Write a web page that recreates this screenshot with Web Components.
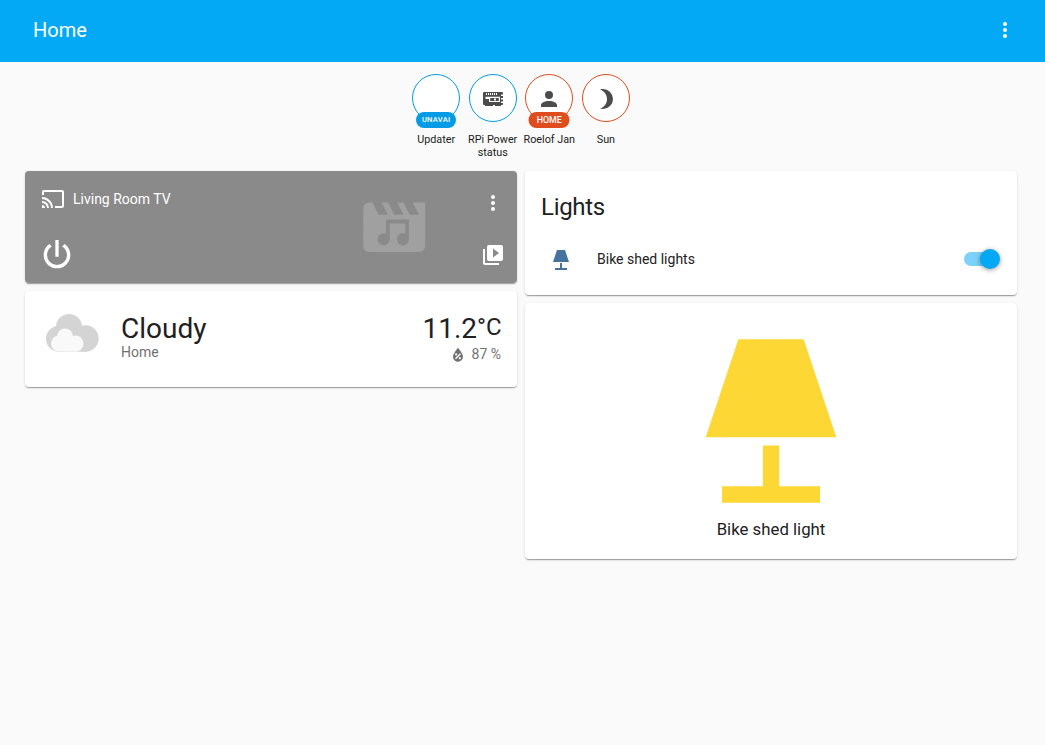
<!DOCTYPE html>
<html lang="en">
<head>
<meta charset="utf-8">
<title>Home</title>
<style>
  html, body { margin: 0; height: 100%; background: #fafafa; overflow: hidden; }
  body { font-family: Roboto, "Noto Sans", sans-serif; font-size: 14px; line-height: 20px; color: #212121; }
</style>
</head>
<body>
<dash-app></dash-app>
<script>
const ICONS = {
  dots: 'M12,16A2,2 0 0,1 14,18A2,2 0 0,1 12,20A2,2 0 0,1 10,18A2,2 0 0,1 12,16M12,10A2,2 0 0,1 14,12A2,2 0 0,1 12,14A2,2 0 0,1 10,12A2,2 0 0,1 12,10M12,4A2,2 0 0,1 14,6A2,2 0 0,1 12,8A2,2 0 0,1 10,6A2,2 0 0,1 12,4Z',
  cast: 'M1,10V12A9,9 0 0,1 10,21H12C12,14.92 7.07,10 1,10M1,14V16A5,5 0 0,1 6,21H8A7,7 0 0,0 1,14M1,18V21H4A3,3 0 0,0 1,18M21,3H3C1.89,3 1,3.89 1,5V8H3V5H21V19H14V21H21A2,2 0 0,0 23,19V5C23,3.89 22.1,3 21,3Z',
  power: 'M16.56,5.44L15.11,6.89C16.84,7.94 18,9.83 18,12A6,6 0 0,1 12,18A6,6 0 0,1 6,12C6,9.83 7.16,7.94 8.88,6.88L7.44,5.44C5.36,6.88 4,9.28 4,12A8,8 0 0,0 12,20A8,8 0 0,0 20,12C20,9.28 18.64,6.88 16.56,5.44M13,3H11V13H13',
  browse: 'M4,6H2V20A2,2 0 0,0 4,22H18V20H4V6M20,2H8A2,2 0 0,0 6,4V16A2,2 0 0,0 8,18H20A2,2 0 0,0 22,16V4A2,2 0 0,0 20,2M12,14.5V5.5L18,10L12,14.5Z',
  humidity: 'M12,3.25C12,3.25 6,10 6,14C6,17.32 8.69,20 12,20A6,6 0 0,0 18,14C18,10 12,3.25 12,3.25M14.47,9.97L15.53,11.03L9.53,17.03L8.47,15.97M9.75,10A1.25,1.25 0 0,1 11,11.25A1.25,1.25 0 0,1 9.75,12.5A1.25,1.25 0 0,1 8.5,11.25A1.25,1.25 0 0,1 9.75,10M14.25,14.5A1.25,1.25 0 0,1 15.5,15.75A1.25,1.25 0 0,1 14.25,17A1.25,1.25 0 0,1 13,15.75A1.25,1.25 0 0,1 14.25,14.5Z',
  account: 'M12,4A4,4 0 0,1 16,8A4,4 0 0,1 12,12A4,4 0 0,1 8,8A4,4 0 0,1 12,4M12,14C16.42,14 20,15.79 20,18V20H4V18C4,15.79 7.58,14 12,14Z',
  moon: 'M9,2C7.95,2 6.95,2.16 6,2.46C10.06,3.73 13,7.5 13,12C13,16.5 10.06,20.27 6,21.54C6.95,21.84 7.95,22 9,22A10,10 0 0,0 19,12A10,10 0 0,0 9,2Z',
  lamp: 'M8,2H16L20,14H4L8,2M11,15H13V20H18V22H6V20H11V15Z',
  board: 'M3,5H21A1,1 0 0,1 22,6V7.5H20V9H22V11H20V12.5H22V14.5H20V16H22V17A1,1 0 0,1 21,18H20V19H14V18H12V19H4V18H3A1,1 0 0,1 2,17V6A1,1 0 0,1 3,5M5,6V8H6V6M7,6V8H8V6M9,6V8H10V6M11,6V8H12V6M13,6V8H14V6M15,6V8H16V6M4.5,9.7V12H8V15H19V9.7M9.2,11H17.8V14H9.2M13,11.5V13.5H15V11.5Z',
  media: 'M18,4l2,4h-3l-2,-4h-2l2,4h-3l-2,-4H8l2,4H7L5,4H4c-1.1,0 -2,0.9 -2,2v12c0,1.1 0.9,2 2,2h16c1.1,0 2,-0.9 2,-2V4zM9.4,9.5V14.15A1.95,1.95 0 1,0 10.55,16V10.8H15.6V14.15A1.95,1.95 0 1,0 16.75,16V9.5Z'
};

function define(name, css, html) {
  customElements.define(name, class extends HTMLElement {
    constructor() {
      super();
      const t = document.createElement('template');
      t.innerHTML = '<style>' + css + '</style>' + html;
      this.attachShadow({ mode: 'open' }).append(t.content.cloneNode(true));
    }
  });
}

customElements.define('mdi-icon', class extends HTMLElement {
  connectedCallback() {
    if (this.shadowRoot) return;
    this.attachShadow({ mode: 'open' }).innerHTML =
      '<style>:host{display:block;flex:none;width:var(--size,24px);height:var(--size,24px)}svg{display:block;width:100%;height:100%}</style>' +
      '<svg viewBox="0 0 24 24" fill="currentColor" fill-rule="evenodd"><path d="' + ICONS[this.getAttribute('name')] + '"/></svg>';
  }
});

define('app-toolbar', `
  :host { display: flex; box-sizing: border-box; height: 62px; padding: 0 28px 2px 33px; align-items: center;
    justify-content: space-between; background: #03a9f4; color: #fff; font-size: 20px; }`,
  `<slot></slot><mdi-icon name="dots"></mdi-icon>`);

define('state-badge', `
  :host { display: block; width: 56.6px; text-align: center; font-size: 10.8px; line-height: 13px; --c: #039be5; }
  :host([red]) { --c: #df4c1e; }
  .ring { position: relative; box-sizing: border-box; width: 48px; height: 48px; margin: 0 auto 11px; border: 1px solid var(--c);
    border-radius: 50%; background: #fff; color: #4c4c4c; display: grid; place-items: center; padding-top: 2px; }
  ::slotted([slot=pill]) { position: absolute; left: 50%; top: 37px; transform: translateX(-50%); height: 16px; line-height: 16px;
    border-radius: 8px; background: var(--c); color: #fff; font-weight: 500; white-space: nowrap; text-align: center; }`,
  `<div class="ring"><slot name="icon"></slot><slot name="pill"></slot></div><slot></slot>`);

define('dash-card', `
  :host { display: block; box-sizing: border-box; height: var(--h); background: #fff; border-radius: 4px;
    box-shadow: 0 2px 1px -1px rgba(0,0,0,.2), 0 1px 1px 0 rgba(0,0,0,.14), 0 1px 3px 0 rgba(0,0,0,.12); }`,
  `<slot></slot>`);

define('media-player', `
  :host { display: flex; box-sizing: border-box; height: 100%; border-radius: 4px; background: #8a8a8a; color: #fff; padding: 16px 12px 8px 16px; justify-content: space-between; }
  .left { display: flex; flex-direction: column; flex: 1; gap: 24px; }
  .name { display: flex; gap: 8px; align-items: center; height: 24px; }
  .power { --size: 40px; margin-left: -4px; }
  .art { --size: 74.4px; color: #a0a0a0; margin: 2.6px 49.8px 0 0; }
  .right { display: flex; flex-direction: column; gap: 28px; padding-top: 4px; }`,
  `<div class="left"><div class="name"><mdi-icon name="cast"></mdi-icon><span>Living Room TV</span></div>
   <mdi-icon class="power" name="power"></mdi-icon></div>
   <mdi-icon class="art" name="media"></mdi-icon>
   <div class="right"><mdi-icon name="dots"></mdi-icon><mdi-icon name="browse"></mdi-icon></div>`);

define('weather-forecast', `
  :host { display: flex; box-sizing: border-box; height: 100%; padding: 22px 16px 0 20px; }
  svg { flex: none; width: 54px; height: 40px; margin-right: 22px; }
  .main { flex: 1; }
  .big { font-size: 28px; line-height: 32px; height: 30px; }
  .sub { color: #727272; line-height: 18px; }
  .temp { text-align: right; }
  .temp .big { display: flex; justify-content: flex-end; margin-right: -0.6px; }
  .unit { font-size: 24px; line-height: 29px; }
  .hum { --size: 20px; display: flex; justify-content: flex-end; align-items: center; gap: 4px; padding-top: 2px; height: 18px; }
  .hum mdi-icon { margin-top: 2px; }`,
  `<svg viewBox="0 0 54 40"><g fill="#d4d4d4"><circle cx="14" cy="25.7" r="13"/><circle cx="24" cy="14" r="13"/><circle cx="40.5" cy="25.5" r="13.2"/><path d="M14 18h27v20.7H14z"/></g>
   <g fill="#f9f9f9"><circle cx="14" cy="30.5" r="8"/><circle cx="20" cy="23.5" r="8"/><circle cx="30.5" cy="30.5" r="8"/><path d="M14 27h17v11.5H14z"/></g></svg>
   <div class="main"><div class="big">Cloudy</div><div class="sub">Home</div></div>
   <div class="temp"><div class="big">11.2<span class="unit">°C</span></div><div class="sub hum"><mdi-icon name="humidity"></mdi-icon><span>87 %</span></div></div>`);

define('toggle-switch', `
  :host { display: flex; align-items: center; justify-content: flex-end; width: 36px; height: 14px; border-radius: 7px;
    background: linear-gradient(90deg, #7bd1f9 0 26px, transparent 26px); }
  i { width: 20px; height: 20px; border-radius: 50%; background: #03a9f4; box-shadow: 0 1px 5px rgba(0,0,0,.4); flex: none; }`,
  `<i></i>`);

define('entities-list', `
  :host { display: block; padding: 20px 17px 0 16px; }
  .title { font-size: 24px; line-height: 32px; letter-spacing: -0.012em; }
  .row { display: flex; align-items: center; height: 40px; margin-top: 16px; }
  mdi-icon { color: #44739e; margin: 2px 24px 0 8px; }
  span { flex: 1; }`,
  `<div class="title">Lights</div><div class="row"><mdi-icon name="lamp"></mdi-icon><span>Bike shed lights</span><toggle-switch></toggle-switch></div>`);

define('light-button', `
  :host { display: flex; flex-direction: column; align-items: center; padding-top: 19.6px; font-size: 16.8px; line-height: 20px; }
  mdi-icon { --size: 196px; color: #fdd835; margin-bottom: 0.9px; }`,
  `<mdi-icon name="lamp"></mdi-icon><span>Bike shed light</span>`);

define('dash-app', `
  :host { display: block; }
  .badges { display: flex; justify-content: center; padding: 12px 28px 0 25px; height: 97px; box-sizing: content-box; }
  .cols { display: grid; grid-template-columns: 1fr 1fr; gap: 8px; padding: 0 28px 0 25px; align-items: start; }
  .col { display: grid; gap: 8px; }`,
  `<app-toolbar>Home</app-toolbar>
   <div class="badges">
     <state-badge><b slot="pill" style="width:40px;font-size:7.6px;letter-spacing:.25px">UNAVAI</b>Updater</state-badge>
     <state-badge><mdi-icon slot="icon" name="board"></mdi-icon>RPi Power status</state-badge>
     <state-badge red><mdi-icon slot="icon" name="account"></mdi-icon><b slot="pill" style="width:41px;font-size:8.8px">HOME</b>Roelof Jan</state-badge>
     <state-badge red><mdi-icon slot="icon" name="moon"></mdi-icon>Sun</state-badge>
   </div>
   <div class="cols">
     <div class="col">
       <dash-card style="--h:112px"><media-player></media-player></dash-card>
       <dash-card style="--h:96px"><weather-forecast></weather-forecast></dash-card>
     </div>
     <div class="col">
       <dash-card style="--h:124px"><entities-list></entities-list></dash-card>
       <dash-card style="--h:256px"><light-button></light-button></dash-card>
     </div>
   </div>`);
</script>
</body>
</html>
